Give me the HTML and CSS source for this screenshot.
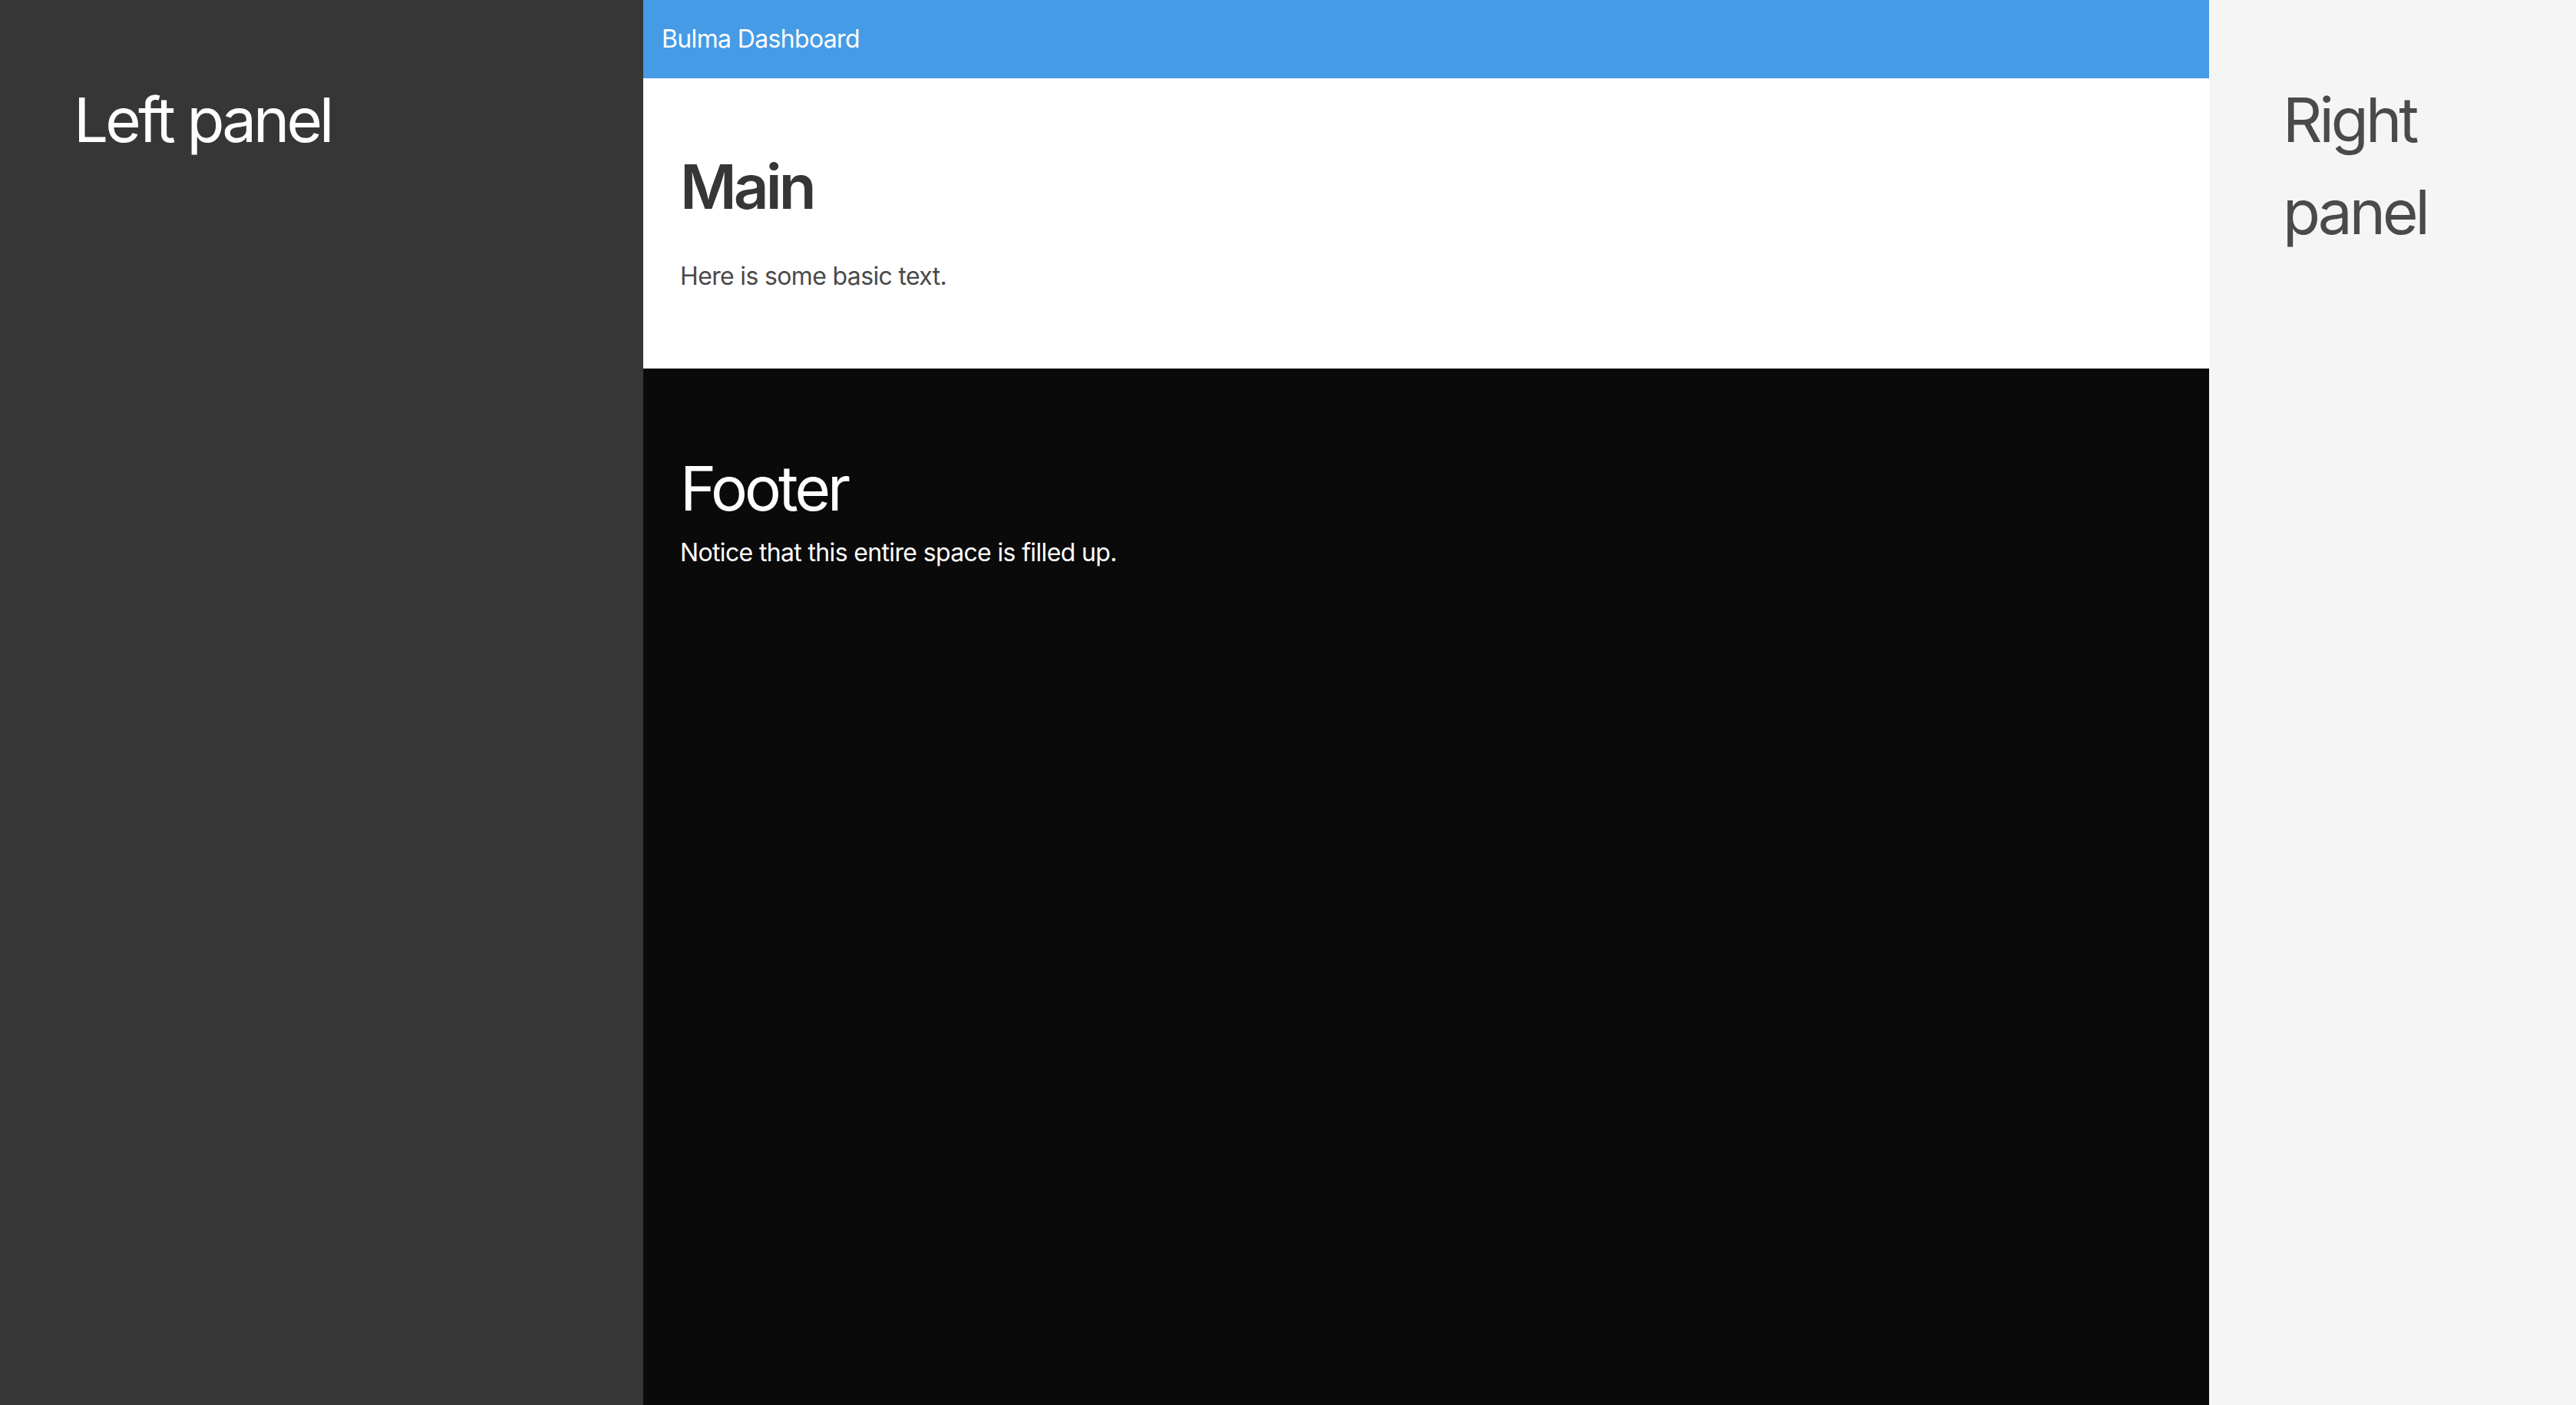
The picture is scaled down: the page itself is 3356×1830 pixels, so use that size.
FILE: index.html
```html
<!DOCTYPE html>
<html lang="en">
<head>
<meta charset="utf-8">
<title>Bulma Dashboard</title>
<link rel="stylesheet" href="styles.css">
</head>
<body>
<div class="dashboard">
  <aside class="panel-left">
    <h1 class="panel-title">Left panel</h1>
  </aside>
  <div class="main-column">
    <nav class="navbar">
      <a class="navbar-item">Bulma Dashboard</a>
    </nav>
    <section class="section">
      <h1 class="title">Main</h1>
      <p class="text">Here is some basic text.</p>
    </section>
    <footer class="footer">
      <h1 class="panel-title">Footer</h1>
      <p class="footer-text">Notice that this entire space is filled up.</p>
    </footer>
  </div>
  <aside class="panel-right">
    <h1 class="panel-title">Right panel</h1>
  </aside>
</div>
</body>
</html>
```

FILE: styles.css
```css
* { box-sizing: border-box; }
html, body {
  margin: 0;
  padding: 0;
  height: 100%;
}
body {
  font-family: Inter, "Noto Sans", "Liberation Sans", sans-serif;
  font-size: 32px;
  line-height: 1.5;
  letter-spacing: -0.65px;
  color: #4a4a4a;
}
h1, p { margin: 0; }

.dashboard {
  display: flex;
  height: 100vh;
}

.panel-title {
  font-size: 80px;
  font-weight: 400;
  line-height: 1.5;
  letter-spacing: -4px;
}

.panel-left {
  flex: 0 0 838px;
  background: #363636;
  color: #ffffff;
  padding: 96px;
}

.panel-right {
  flex: 0 0 478px;
  background: #f5f5f5;
  color: #4a4a4a;
  padding: 96px;
}

.main-column {
  flex: 1;
  display: flex;
  flex-direction: column;
  min-width: 0;
}

.navbar {
  height: 102px;
  background: #469be6;
  display: flex;
  align-items: center;
  padding: 0 24px;
}
.navbar-item {
  color: #ffffff;
  font-size: 32px;
  line-height: 1.5;
}

.section {
  background: #ffffff;
  padding: 96px 48px;
}
.title {
  font-size: 80px;
  font-weight: 600;
  line-height: 1.125;
  letter-spacing: -4px;
  color: #363636;
  margin-bottom: 48px;
}
.text {
  color: #4a4a4a;
}

.footer {
  flex: 1;
  background: #0a0a0a;
  color: #ffffff;
  padding: 96px 48px 192px;
}
.footer-text {
  color: #ffffff;
}
```
